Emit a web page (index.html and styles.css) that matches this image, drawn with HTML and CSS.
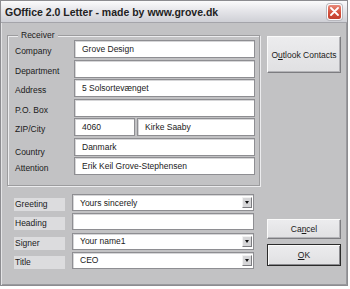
FILE: index.html
```html
<!DOCTYPE html>
<html lang="en">
<head>
    <meta charset="UTF-8">
    <title>GOffice 2.0 Letter</title>
    <link rel="stylesheet" href="styles.css">
</head>
<body>
    <div class="window">
        <div class="titlebar">
            <span class="title">GOffice 2.0 Letter - made by www.grove.dk</span>
            <span class="close">
                <svg width="9" height="9" viewBox="0 0 9 9"><path d="M1 1L8 8M8 1L1 8" stroke="#fff" stroke-width="1.8" stroke-linecap="round"/></svg>
            </span>
        </div>
        <div class="content">
            <div class="left">
                <div class="frame">
                    <span class="legend">Receiver</span>
                    <div class="row"><span class="label">Company</span><div class="field">Grove Design</div></div>
                    <div class="row"><span class="label">Department</span><div class="field"></div></div>
                    <div class="row"><span class="label">Address</span><div class="field">5 Solsortevænget</div></div>
                    <div class="row"><span class="label">P.O. Box</span><div class="field"></div></div>
                    <div class="row"><span class="label">ZIP/City</span><div class="field zip">4060</div><div class="field city">Kirke Saaby</div></div>
                    <div class="row"><span class="label low">Country</span><div class="field">Danmark</div></div>
                    <div class="row"><span class="label">Attention</span><div class="field">Erik Keil Grove-Stephensen</div></div>
                </div>
                <div class="letter">
                    <div class="line"><span class="tag">Greeting</span><div class="field combo"><span>Yours sincerely</span><span class="drop"></span></div></div>
                    <div class="line"><span class="tag">Heading</span><div class="field"></div></div>
                    <div class="line"><span class="tag">Signer</span><div class="field combo"><span>Your name1</span><span class="drop"></span></div></div>
                    <div class="line"><span class="tag">Title</span><div class="field combo"><span>CEO</span><span class="drop"></span></div></div>
                </div>
            </div>
            <div class="right">
                <button class="btn outlook">O<u>u</u>tlook Contacts</button>
                <button class="btn cancel">Ca<u>n</u>cel</button>
                <button class="btn ok"><u>O</u>K</button>
            </div>
        </div>
    </div>
</body>
</html>
```

FILE: styles.css
```css
body {
    margin: 0;
    background: #fff;
    font-family: 'Liberation Sans', Arial, sans-serif;
    font-size: 8.5px;
    color: #1a1a1a;
}
.window {
    width: 348px;
    height: 286px;
    box-sizing: border-box;
    background: #c2c2c4;
    border: 1px solid #8c8c90;
    box-shadow: inset 1px 1px 0 #e4e4e6, inset -1px -1px 0 #9a9a9e;
}
.titlebar {
    height: 21px;
    display: flex;
    align-items: center;
    justify-content: space-between;
    padding: 0 5px 0 4px;
    background: linear-gradient(#fbfbfc, #e6e6ea 45%, #cfd0d6);
    border-bottom: 1px solid #a4a4aa;
}
.title {
    font-size: 10.5px;
    font-weight: bold;
    color: #222;
}
.close {
    width: 15px;
    height: 16px;
    box-sizing: border-box;
    display: flex;
    align-items: center;
    justify-content: center;
    border-radius: 3px;
    border: 1px solid #fff;
    background: linear-gradient(#e88a7a, #d4503c 55%, #c24030);
    box-shadow: 0 0 0 1px #b8b8be;
}
.content {
    display: flex;
    gap: 7px;
    padding: 12px 6px 0 6px;
}
.left {
    width: 253px;
}
.frame {
    position: relative;
    height: 151px;
    box-sizing: border-box;
    border: 1px solid #9c9c9e;
    box-shadow: inset 1px 1px 0 #ececee, 1px 1px 0 #ececee;
    padding: 4px 4px 0 7px;
    display: flex;
    flex-direction: column;
    gap: 1.5px;
}
.legend {
    position: absolute;
    top: -6px;
    left: 10px;
    padding: 0 3px;
    background: #c2c2c4;
}
.row {
    display: flex;
    height: 18px;
    gap: 2px;
}
.label {
    width: 57px;
    align-self: flex-end;
    padding-bottom: 2px;
}
.label.low {
    margin-bottom: -3px;
}
.field {
    flex: 1;
    box-sizing: border-box;
    background: #fff;
    border: 1px solid #8e8e92;
    box-shadow: inset 1px 1px 0 #d6d6d8;
    padding-left: 7px;
    display: flex;
    align-items: center;
}
.field.zip {
    flex: 0 0 61px;
}
.letter {
    margin-top: 8px;
    display: flex;
    flex-direction: column;
    gap: 2.3px;
}
.line {
    display: flex;
    height: 17px;
    gap: 7px;
    padding-left: 7px;
}
.tag {
    width: 51px;
    height: 13px;
    align-self: flex-end;
    background: #dcdcde;
    padding-left: 1px;
    box-sizing: border-box;
    line-height: 13px;
}
.line .field {
    flex: 0 0 182px;
}
.combo {
    justify-content: space-between;
    padding-right: 1px;
}
.drop {
    width: 10px;
    height: 11px;
    background: #d6d6d8;
    border: 1px solid;
    border-color: #f2f2f2 #7c7c80 #7c7c80 #f2f2f2;
    box-sizing: border-box;
    display: flex;
    align-items: center;
    justify-content: center;
}
.drop::after {
    content: "";
    border-left: 2.5px solid transparent;
    border-right: 2.5px solid transparent;
    border-top: 3px solid #111;
}
.right {
    width: 74px;
    display: flex;
    flex-direction: column;
}
.btn {
    font-family: inherit;
    font-size: 8.5px;
    color: #1a1a1a;
    padding: 0;
    background: linear-gradient(#ececee, #e0e0e2);
    border: 1px solid;
    border-color: #fafafa #7c7c80 #7c7c80 #fafafa;
    box-shadow: inset -1px -1px 0 #b4b4b8;
}
.outlook {
    height: 37px;
    margin-top: 1px;
}
.cancel {
    height: 20px;
    margin-top: 146px;
}
.ok {
    height: 22px;
    margin-top: 5px;
    border: 1px solid #2a2a2a;
    box-shadow: inset 1px 1px 0 #fafafa, inset -1px -1px 0 #8a8a8e;
}
```
